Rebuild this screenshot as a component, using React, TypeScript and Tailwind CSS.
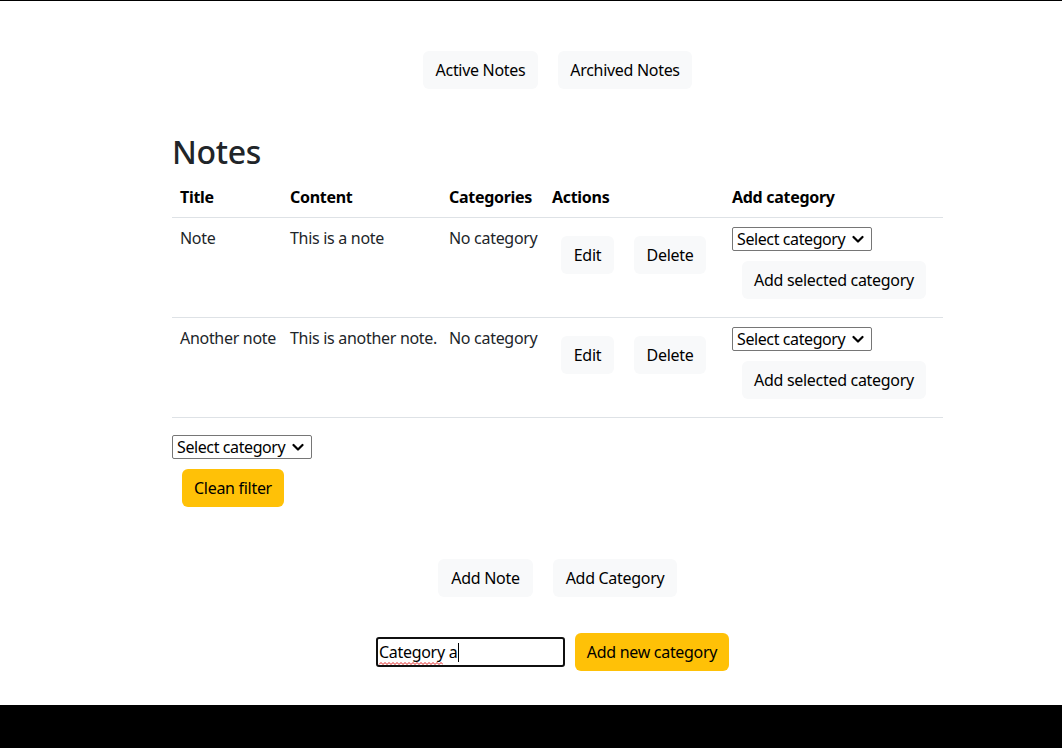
import React from "react";

const font = { fontFamily: '"Noto Sans", "Liberation Sans", sans-serif' };

function LightBtn({ children, w }: { children: React.ReactNode; w: string }) {
  return (
    <button
      className={`h-[38px] ${w} shrink-0 rounded-[6px] bg-[#f8f9fa] text-[16px] leading-6 tracking-[-0.3px] text-black whitespace-nowrap flex items-center justify-center`}
    >
      {children}
    </button>
  );
}

function WarnBtn({ children, w, cls = "" }: { children: React.ReactNode; w: string; cls?: string }) {
  return (
    <button
      className={`h-[38px] ${w} ${cls} shrink-0 rounded-[6px] bg-[#ffc107] text-[16px] leading-6 tracking-[-0.3px] text-black whitespace-nowrap flex items-center justify-center`}
    >
      {children}
    </button>
  );
}

function SelectBox({ cls = "" }: { cls?: string }) {
  return (
    <div
      className={`h-[24px] w-[140px] border border-[#767676] rounded-[2px] bg-white flex items-center pl-[4px] pr-[7px] text-[16px] leading-5 tracking-[-0.4px] text-black ${cls}`}
    >
      <span className="flex-1 whitespace-nowrap">Select category</span>
      <svg width="12" height="12" viewBox="0 0 12 12" className="shrink-0">
        <path d="M1.5 4 L6 8.5 L10.5 4" fill="none" stroke="#000" strokeWidth="2.2" strokeLinecap="round" strokeLinejoin="round" />
      </svg>
    </div>
  );
}

const notes = [
  { title: "Note", content: "This is a note" },
  { title: "Another note", content: "This is another note." },
];

function Wave() {
  let d = "M0 2.5";
  for (let x = 0; x < 64; x += 4) {
    d += ` L${x + 2} 0.5 L${x + 4} 2.5`;
  }
  return (
    <svg className="absolute left-0 bottom-[-3px]" width="64" height="3" viewBox="0 0 64 3">
      <path d={d} fill="none" stroke="#e02020" strokeWidth="1" />
    </svg>
  );
}

export default function App() {
  return (
    <div style={font} className="h-[748px] flex flex-col bg-white text-[#212529] border-t border-black overflow-hidden">
      <div className="ml-[172px] w-[771px] flex flex-col">
        <div className="mt-[50px] flex justify-center gap-[20px]">
          <LightBtn w="w-[115px]">Active Notes</LightBtn>
          <LightBtn w="w-[134px]">Archived Notes</LightBtn>
        </div>

        <h2 className="mt-[44px] mb-[6px] text-[32px] leading-[38px] font-medium tracking-[-0.3px] text-[#212529]">Notes</h2>

        <table className="table-fixed w-[771px] border-collapse text-[16px] leading-6 tracking-[-0.3px] mb-[16px]">
          <colgroup>
            <col className="w-[110px]" />
            <col className="w-[159px]" />
            <col className="w-[103px]" />
            <col className="w-[180px]" />
            <col className="w-[219px]" />
          </colgroup>
          <thead>
            <tr className="border-b border-[#dee2e6]">
              <th className="text-left font-bold text-black px-2 py-2 align-top">Title</th>
              <th className="text-left font-bold text-black px-2 py-2 align-top">Content</th>
              <th className="text-left font-bold text-black px-2 py-2 align-top">Categories</th>
              <th className="text-left font-bold text-black px-2 py-2 align-top">Actions</th>
              <th className="text-left font-bold text-black px-2 py-2 align-top">Add category</th>
            </tr>
          </thead>
          <tbody>
            {notes.map((n) => (
              <tr key={n.title} className="border-b border-[#dee2e6]">
                <td className="px-2 py-2 align-top whitespace-nowrap">{n.title}</td>
                <td className="px-2 py-2 align-top whitespace-nowrap">{n.content}</td>
                <td className="px-2 py-2 align-top whitespace-nowrap">No category</td>
                <td className="px-2 py-2 align-top">
                  <div className="flex gap-[20px] pl-[9px] pt-[10px]">
                    <LightBtn w="w-[53px]">Edit</LightBtn>
                    <LightBtn w="w-[72px]">Delete</LightBtn>
                  </div>
                </td>
                <td className="px-2 py-2 align-top">
                  <div className="flex flex-col items-start pt-[1px]">
                    <SelectBox />
                    <div className="m-[10px] mb-[10px]">
                      <LightBtn w="w-[184px]">Add selected category</LightBtn>
                    </div>
                  </div>
                </td>
              </tr>
            ))}
          </tbody>
        </table>

        <div className="flex flex-col items-start mt-[1px]">
          <SelectBox />
          <WarnBtn w="w-[102px]" cls="m-[10px]">Clean filter</WarnBtn>
        </div>

        <div className="mt-[42px] flex justify-center gap-[20px]">
          <LightBtn w="w-[95px]">Add Note</LightBtn>
          <LightBtn w="w-[124px]">Add Category</LightBtn>
        </div>

        <div className="mt-[36px] flex items-center gap-[10px] ml-[204px]">
          <div className="h-[30px] w-[189px] border-2 border-[#101010] rounded-[3px] flex items-center px-[1px] text-[16px] leading-5 tracking-[-0.3px] text-black">
            <span className="relative">
              Category
              <Wave />
            </span>
            <span>&nbsp;a</span>
            <span className="inline-block w-[1px] h-[19px] bg-black ml-[1px]" />
          </div>
          <WarnBtn w="w-[154px]">Add new category</WarnBtn>
        </div>
      </div>

      <div className="mt-auto h-[43px] bg-black shrink-0" />
    </div>
  );
}
